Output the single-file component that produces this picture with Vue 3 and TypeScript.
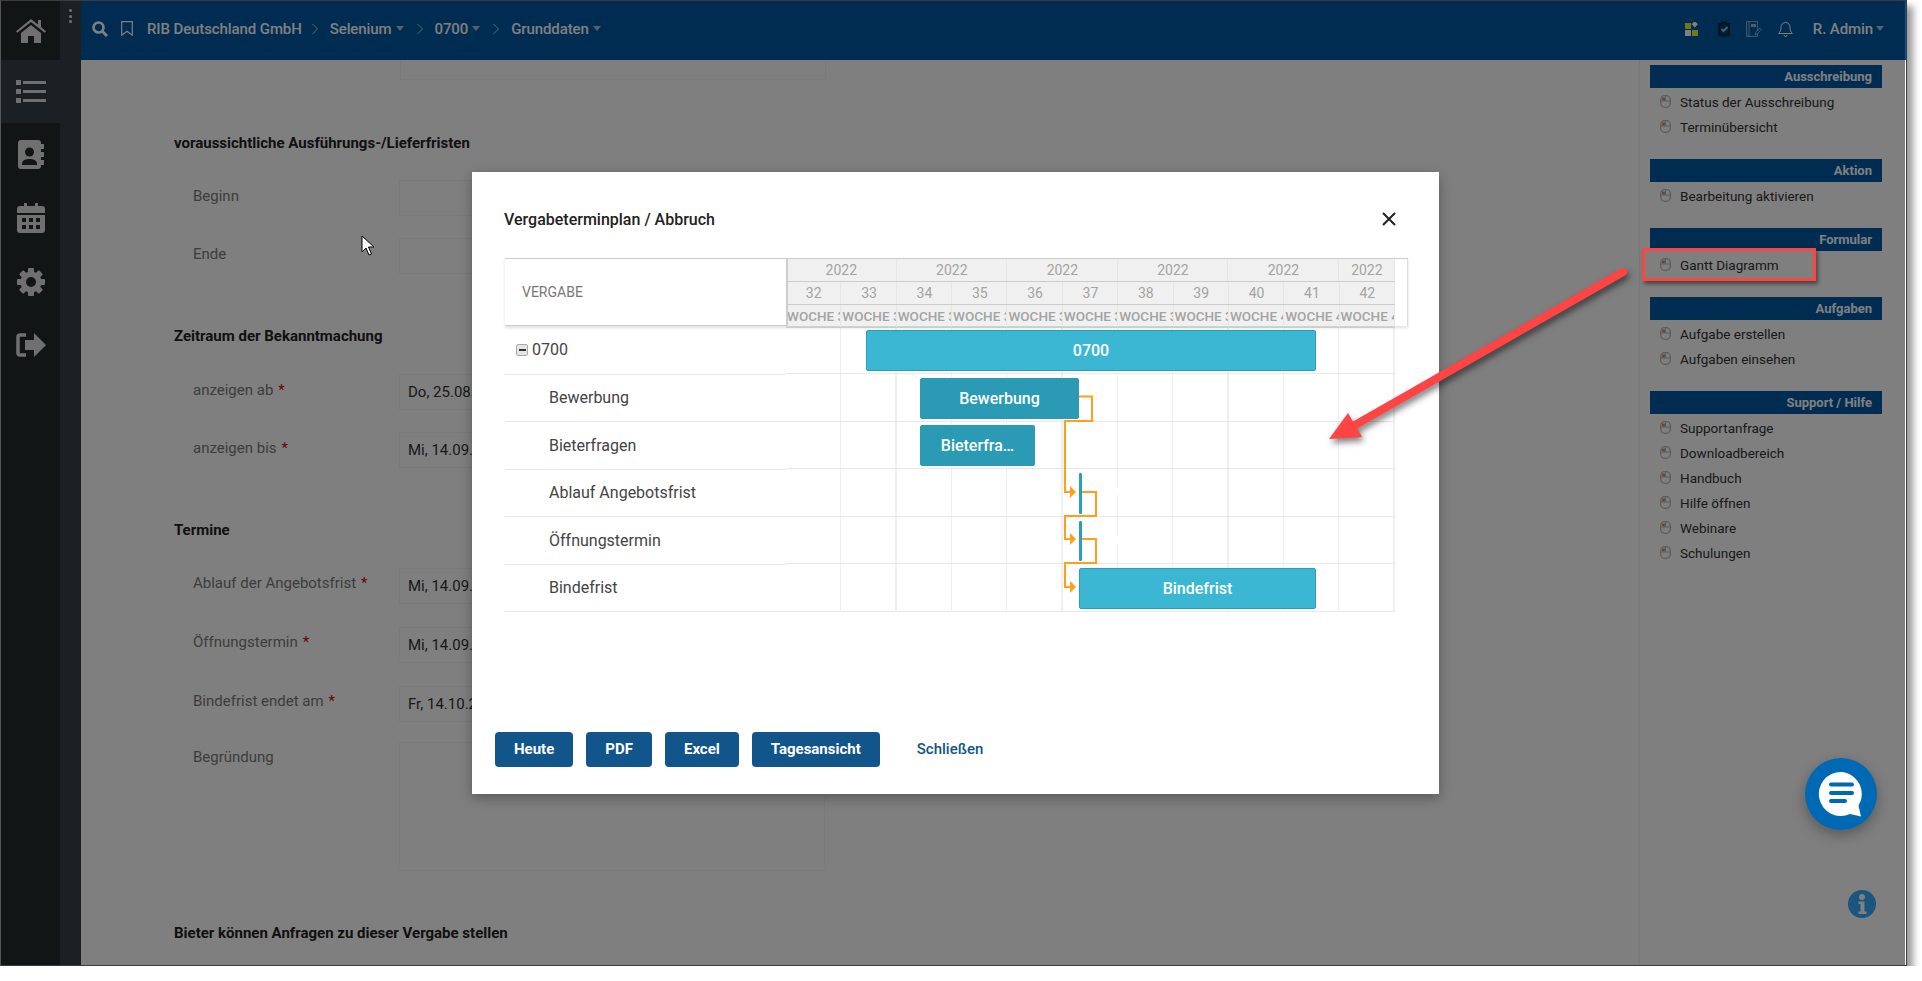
<script setup lang="ts">
interface FormRow {
  label: string
  value?: string
  required?: boolean
  tall?: boolean
}

interface FormSection {
  title: string
  rows: FormRow[]
  wide?: boolean
}

interface GanttBar {
  text: string
  x1: number
  x2: number
  y: number
  dark?: boolean
}

const crumbs = [
  { text: 'RIB Deutschland GmbH', caret: false },
  { text: 'Selenium', caret: true },
  { text: '0700', caret: true },
  { text: 'Grunddaten', caret: true },
]

const sections: FormSection[] = [
  {
    title: 'voraussichtliche Ausführungs-/Lieferfristen',
    rows: [{ label: 'Beginn' }, { label: 'Ende' }],
  },
  {
    title: 'Zeitraum der Bekanntmachung',
    rows: [
      { label: 'anzeigen ab', value: 'Do, 25.08.2022', required: true },
      { label: 'anzeigen bis', value: 'Mi, 14.09.2022', required: true },
    ],
  },
  {
    title: 'Termine',
    wide: true,
    rows: [
      { label: 'Ablauf der Angebotsfrist', value: 'Mi, 14.09.2022', required: true },
      { label: 'Öffnungstermin', value: 'Mi, 14.09.2022', required: true },
      { label: 'Bindefrist endet am', value: 'Fr, 14.10.2022', required: true },
      { label: 'Begründung', tall: true },
    ],
  },
  { title: 'Bieter können Anfragen zu dieser Vergabe stellen', rows: [] },
]

const panels = [
  { title: 'Ausschreibung', items: ['Status der Ausschreibung', 'Terminübersicht'] },
  { title: 'Aktion', items: ['Bearbeitung aktivieren'] },
  { title: 'Formular', items: ['Gantt Diagramm'] },
  { title: 'Aufgaben', items: ['Aufgabe erstellen', 'Aufgaben einsehen'] },
  {
    title: 'Support / Hilfe',
    items: ['Supportanfrage', 'Downloadbereich', 'Handbuch', 'Hilfe öffnen', 'Webinare', 'Schulungen'],
  },
]

const weeks = [32, 33, 34, 35, 36, 37, 38, 39, 40, 41, 42]
const years = [2, 2, 2, 2, 2, 1]
const ganttRows = ['Bewerbung', 'Bieterfragen', 'Ablauf Angebotsfrist', 'Öffnungstermin', 'Bindefrist']

// gantt canvas starts at page x 786 / y 326, values below are page coordinates
const bars: GanttBar[] = [
  { text: '0700', x1: 866, x2: 1316, y: 330 },
  { text: 'Bewerbung', x1: 920, x2: 1079, y: 378, dark: true },
  { text: 'Bieterfra…', x1: 920, x2: 1035, y: 425, dark: true },
  { text: 'Bindefrist', x1: 1079, x2: 1316, y: 568 },
]

function barStyle(bar: GanttBar) {
  return { left: `${bar.x1 - 786}px`, width: `${bar.x2 - bar.x1}px`, top: `${bar.y - 326}px` }
}

const links = [
  '293,70.5 306,70.5 306,95 279,95 279,166 285,166',
  '296,166 310,166 310,190 279,190 279,213 285,213',
  '296,213 310,213 310,237 279,237 279,261 285,261',
]
const arrows = ['284,160 290,166 284,172', '284,207 290,213 284,219', '284,255 290,261 284,267']
const gearTeeth = [0, 45, 90, 135, 180, 225, 270, 315]
</script>

<template>
  <div class="frame">
    <aside class="rail">
      <nav class="rail__col">
        <div class="rail__item rail__item--home">
          <svg width="30" height="24" viewBox="0 0 30 24"><path d="M15 0 22 5.500V1h3v7l5 4.200-1.300 1.600L15 3 1.300 13.800 0 12.200zM5 14 15 6l10 8v10h-7v-7h-6v7H5z" /></svg>
        </div>
        <div class="rail__item rail__item--active">
          <svg width="30" height="24" viewBox="0 0 30 24"><path d="M0 0h5v5H0zM7 1h23v3H7zM0 9h5v5H0zM7 10h23v3H7zM0 18h5v5H0zM7 19h23v3H7z" /></svg>
        </div>
        <div class="rail__item">
          <svg width="28" height="30" viewBox="0 0 28 30">
            <path d="M4 0h17a3 3 0 0 1 3 3v1h3v5h-3v3h3v5h-3v3h3v5h-3v1a3 3 0 0 1-3 3H4a3 3 0 0 1-3-3V3a3 3 0 0 1 3-3z" />
            <circle class="cut" cx="12.500" cy="12" r="4.500" />
            <path class="cut" d="M5 24c0-4 4-5 7.500-5s7.500 1 7.500 5v1H5z" />
          </svg>
        </div>
        <div class="rail__item">
          <svg width="28" height="30" viewBox="0 0 28 30">
            <path d="M7 0h3v3h8V0h3v3h4a3 3 0 0 1 3 3v4H0V6a3 3 0 0 1 3-3h4zM0 12h28v15a3 3 0 0 1-3 3H3a3 3 0 0 1-3-3z" />
            <path class="cut" d="M5 15h4v4H5zM12 15h4v4h-4zM19 15h4v4h-4zM5 22h4v4H5zM12 22h4v4h-4zM19 22h4v4h-4z" />
          </svg>
        </div>
        <div class="rail__item">
          <svg width="28" height="28" viewBox="0 0 28 28">
            <rect v-for="a in gearTeeth" :key="a" x="11" y="0" width="6" height="8" rx="1" :transform="`rotate(${a} 14 14)`" />
            <circle cx="14" cy="14" r="10.500" />
            <circle class="cut" cx="14" cy="14" r="5" />
          </svg>
        </div>
        <div class="rail__item">
          <svg width="30" height="24" viewBox="0 0 30 24">
            <path d="M18 0l12 12-12 12v-7H9V7h9z" />
            <path d="M10 2H4a2 2 0 0 0-2 2v16a2 2 0 0 0 2 2h6" fill="none" stroke="#e0e0e0" stroke-width="3.500" />
          </svg>
        </div>
      </nav>
      <div class="rail__dots"><i /><i /><i /></div>
    </aside>

    <div class="page">
      <header class="topbar">
        <svg class="topbar__search" width="16" height="16" viewBox="0 0 16 16"><circle cx="6.500" cy="6.500" r="5" fill="none" stroke="#fff" stroke-width="2.600" /><path d="M10 10l5 5" stroke="#fff" stroke-width="3" /></svg>
        <svg class="topbar__mark" width="12" height="15" viewBox="0 0 12 15"><path d="M.7.700h10.600v13.500L6 10.300.7 14.200z" fill="none" stroke="#fff" stroke-width="1.200" /></svg>
        <template v-for="(crumb, i) in crumbs" :key="crumb.text">
          <svg v-if="i > 0" class="crumb__sep" width="6" height="12" viewBox="0 0 6 12"><path d="M.5 1l5 5-5 5" fill="none" stroke="#fff" stroke-opacity=".7" stroke-width="1" /></svg>
          <span class="crumb">{{ crumb.text }}</span>
          <span v-if="crumb.caret" class="caret" />
        </template>
        <div class="topbar__right">
          <svg class="tool tool--apps" width="14" height="14" viewBox="0 0 14 14">
            <rect x="0" y="1" width="6" height="6" fill="#e6f020" />
            <rect x="7.500" y="0" width="4.500" height="4.500" transform="rotate(45 9.750 2.250)" fill="#fff" />
            <rect x="0" y="8" width="6" height="6" fill="#fff" />
            <rect x="7" y="8" width="6" height="6" fill="#e6f020" />
          </svg>
          <svg class="tool tool--clip" width="13" height="16" viewBox="0 0 13 16"><path d="M1 3h2.500V1.500h5V3H11v11.500H1z" fill="#003f78" stroke="#0a1a2a" stroke-width="1.300" /><path d="M3.500 8l2 2 4-4" fill="none" stroke="#fff" stroke-opacity=".65" stroke-width="2" /></svg>
          <svg class="tool tool--book" width="16" height="16" viewBox="0 0 16 16"><path d="M.6.600h11v14.800H.6zM3 .6v14.800" fill="none" stroke="#fff" stroke-opacity=".55" stroke-width="1" /><path d="M5 3h5v3H5z" fill="#fff" fill-opacity=".6" /><path d="M9 14l1-3 4-4 1.500 1.500-4 4z" fill="#0058a4" stroke="#fff" stroke-opacity=".6" stroke-width=".8" /></svg>
          <svg class="tool tool--bell" width="15" height="16" viewBox="0 0 15 16"><path d="M7.500 1.500c-3 0-4.500 2.200-4.500 5 0 3-1 4.500-2.300 6h13.600c-1.300-1.500-2.300-3-2.300-6 0-2.800-1.500-5-4.500-5zM6 14a1.500 1.500 0 0 0 3 0" fill="none" stroke="#fff" stroke-width="1" /></svg>
          <span class="topbar__user">R. Admin</span>
          <span class="caret" />
        </div>
      </header>

      <div class="body">
        <main class="form">
          <div class="input input--stub" />
          <section v-for="sec in sections" :key="sec.title" class="form__section">
            <h3 class="form__title">{{ sec.title }}</h3>
            <div v-if="sec.rows.length" class="form__rows" :class="{ 'form__rows--wide': sec.wide }">
              <div v-for="row in sec.rows" :key="row.label" class="form__row" :class="{ 'form__row--tall': row.tall }">
                <label class="form__label">{{ row.label }}<b v-if="row.required" class="req">*</b></label>
                <div class="input" :class="{ 'input--tall': row.tall }">{{ row.value }}</div>
              </div>
            </div>
          </section>
        </main>

        <aside class="panel">
          <section v-for="p in panels" :key="p.title" class="panel__group">
            <h4 class="panel__head">{{ p.title }}</h4>
            <ul class="panel__list">
              <li v-for="item in p.items" :key="item" class="panel__item">
                <svg width="11" height="13" viewBox="0 0 11 13">
                  <rect x=".7" y=".7" width="9.600" height="11.600" rx="4" fill="#fff" stroke="#b8b8b8" stroke-width="1.300" />
                  <path d="M2 2.500h3v3H2z" fill="#d89060" />
                  <path d="M5.500 1v5M1 6h9" stroke="#b8b8b8" stroke-width="1" />
                </svg>
                <span>{{ item }}</span>
              </li>
            </ul>
          </section>
        </aside>
      </div>
    </div>

    <div class="overlay" />

    <!-- dialog -->
    <div class="modal">
      <div class="modal__top">
        <h2 class="modal__title">Vergabeterminplan / Abbruch</h2>
        <svg class="modal__close" width="16" height="16" viewBox="0 0 16 16"><path d="M2 2l12 12M14 2 2 14" stroke="#222" stroke-width="2" /></svg>
      </div>

      <div class="gantt">
        <div class="gantt__head">
          <div class="gantt__name">VERGABE</div>
          <div class="gantt__scale">
            <div class="scale__row">
              <div v-for="(span, i) in years" :key="i" class="scale__cell scale__cell--center" :style="{ flex: span }">2022</div>
            </div>
            <div class="scale__row">
              <div v-for="w in weeks" :key="w" class="scale__cell scale__cell--center">{{ w }}</div>
            </div>
            <div class="scale__row scale__row--last">
              <div v-for="w in weeks" :key="w" class="scale__cell">WOCHE {{ w }}</div>
            </div>
          </div>
        </div>
        <div class="gantt__body">
          <div class="gantt__labels">
            <div class="gantt__row gantt__row--root">
              <span class="tree-toggle"><i /></span>
              <span>0700</span>
            </div>
            <div v-for="r in ganttRows" :key="r" class="gantt__row gantt__row--child">{{ r }}</div>
          </div>
          <div class="gantt__canvas">
            <svg class="gantt__links" width="609" height="285" viewBox="0 0 609 285">
              <rect x="330" y="161" width="3" height="8" fill="#fff" />
              <rect x="330" y="210" width="3" height="8" fill="#fff" />
              <polyline v-for="l in links" :key="l" :points="l" fill="none" stroke="#ff9f1a" stroke-width="2" />
              <polygon v-for="a in arrows" :key="a" :points="a" fill="#ff9f1a" />
            </svg>
            <div v-for="b in bars" :key="b.text" class="bar" :class="{ 'bar--dark': b.dark }" :style="barStyle(b)">{{ b.text }}</div>
            <div class="milestone milestone--a" />
            <div class="milestone milestone--b" />
          </div>
        </div>
      </div>

      <footer class="modal__foot">
        <button class="btn">Heute</button>
        <button class="btn">PDF</button>
        <button class="btn">Excel</button>
        <button class="btn">Tagesansicht</button>
        <a class="modal__link">Schließen</a>
      </footer>
    </div>

    <!-- floating buttons -->
    <button class="chat">
      <svg width="48" height="48" viewBox="0 0 48 48">
        <path d="M24 2a22 22 0 1 0 9 42l11 2.500-2.500-11A22 22 0 0 0 24 2z" fill="#fff" />
        <path d="M14 14.500h21M14 23h21M14 31h14" stroke="#0069b4" stroke-width="4" stroke-linecap="round" />
      </svg>
    </button>
    <svg class="info" width="28" height="28" viewBox="0 0 28 28">
      <circle cx="14" cy="14" r="14" fill="#1a5680" />
      <circle cx="14" cy="7" r="3" fill="#808080" />
      <path d="M10.500 11.500h6v10h2V24h-8v-2.500h2v-7.500h-2z" fill="#808080" />
    </svg>

    <!-- screenshot annotations -->
    <svg class="pointer" width="14" height="21" viewBox="0 0 14 21"><path d="M1 1v16l4-4 3 7 2.500-1-3-7H13z" fill="#fff" stroke="#000" stroke-width="1" /></svg>
    <div class="callout" />
    <svg class="arrow" width="330" height="190" viewBox="0 0 330 190">
      <path d="M19 179 38 153 52 177z" fill="#ff4444" />
      <path d="M45 165 313 12" fill="none" stroke="#ff4444" stroke-width="8" stroke-linecap="round" />
    </svg>
  </div>
</template>

<style scoped>
.frame {
  position: relative;
  display: flex;
  width: 1905px;
  height: 964px;
  overflow: hidden;
  border: 1px solid #3c3c3c;
  border-left-color: #555;
  box-shadow: 6px 6px 7px rgba(0, 0, 0, 0.4);
  font-family: Roboto, "Liberation Sans", sans-serif;
  background: #fff;
}

/* ── Rail ─────────────────────────────────────────── */
.rail {
  flex: 0 0 80px;
  display: flex;
  background: #364049;
}

.rail__col {
  width: 59px;
  background: #222a2c;
}

.rail__item {
  height: 63.4px;
  display: flex;
  align-items: center;
  justify-content: center;
}

.rail__item svg {
  fill: #e0e0e0;
}

.rail__item .cut {
  fill: #222a2c;
}

.rail__item--home {
  height: 59px;
}

.rail__item--active {
  background: #364049;
}

.rail__dots {
  display: flex;
  flex-direction: column;
  gap: 2.500px;
  padding: 8px 0 0 9px;
}

.rail__dots i {
  width: 3px;
  height: 3px;
  border-radius: 50%;
  background: #e8e8e8;
}

/* ── Top bar ──────────────────────────────────────── */
.page {
  flex: 1;
  min-width: 0;
  display: flex;
  flex-direction: column;
}

.topbar {
  flex: 0 0 59px;
  box-sizing: border-box;
  display: flex;
  align-items: center;
  padding: 0 0 4px 11px;
  background: #0058a4;
  color: #fff;
  font-size: 15px;
  font-weight: 500;
  letter-spacing: -0.1px;
}

.topbar__search {
  margin-right: 13px;
}

.topbar__mark {
  margin-right: 14px;
}

.crumb__sep {
  margin: 0 12px 0 10px;
}

.caret {
  width: 0;
  height: 0;
  margin-left: 4px;
  margin-right: 1px;
  border: 4.500px solid transparent;
  border-top: 5px solid rgba(255, 255, 255, 0.65);
  border-bottom: 0;
}

.crumb + .caret + .crumb__sep {
  margin-left: 12px;
}

.topbar__right {
  margin-left: auto;
  display: flex;
  align-items: center;
  padding-right: 21px;
}

.tool--clip {
  margin-left: 19px;
}

.tool--book {
  margin-left: 15px;
}

.tool--bell {
  margin-left: 16px;
}

.topbar__user {
  margin-left: 20px;
}

.topbar__right .caret {
  margin-left: 3px;
}

/* ── Form ─────────────────────────────────────────── */
.body {
  flex: 1;
  min-height: 0;
  display: flex;
}

.form {
  flex: 1;
  padding-left: 93px;
  overflow: hidden;
}

.form__section {
  margin-top: 52px;
}

.form__section:first-of-type {
  margin-top: 53px;
}

.form__section:first-of-type .form__title {
  margin-bottom: 27px;
}

.form__title {
  margin: 0 0 28px;
  font-size: 15px;
  line-height: 20px;
  font-weight: 700;
  color: #222;
}

.form__rows {
  display: flex;
  flex-direction: column;
  gap: 22px;
}

.form__rows--wide {
  gap: 23px;
}

.form__row {
  display: flex;
  padding-left: 19px;
}

.form__row--tall {
  margin-top: -3px;
}

.form__label {
  flex: 0 0 206px;
  font-size: 15px;
  line-height: 32px;
  color: #7a7a7a;
}

.form__rows--wide .form__label {
  line-height: 30px;
}

.req {
  margin-left: 5px;
  color: #e00000;
  font-weight: 400;
}

.input {
  width: 426px;
  height: 36px;
  box-sizing: border-box;
  padding: 0 8px;
  border: 1px solid #f4f4f4;
  font-size: 15px;
  line-height: 34px;
  color: #333;
}

.input--stub {
  margin: -16px 0 0 226px;
}

.input--tall {
  height: 129px;
}

/* ── Side panel ───────────────────────────────────── */
.panel {
  flex: 0 0 267px;
  box-sizing: border-box;
  padding: 5px 24px 0 10px;
  border-left: 1px solid #eee;
}

.panel__group {
  margin-bottom: 20px;
}

.panel__head {
  margin: 0;
  height: 23px;
  padding-right: 10px;
  background: #0058a4;
  color: #fff;
  font-size: 13px;
  line-height: 23px;
  font-weight: 700;
  text-align: right;
}

.panel__list {
  margin: 0;
  padding: 1px 0 0;
  list-style: none;
}

.panel__item {
  display: flex;
  align-items: center;
  gap: 9px;
  height: 25px;
  padding-left: 10px;
  font-size: 13.500px;
  color: #333;
}

/* ── Overlay + dialog ─────────────────────────────── */
.overlay {
  position: absolute;
  inset: 0 1px 0 0;
  background: rgba(0, 0, 0, 0.5);
}

.modal {
  position: absolute;
  left: 471px;
  top: 171px;
  width: 967px;
  height: 622px;
  box-sizing: border-box;
  display: flex;
  flex-direction: column;
  padding: 0 31px 27px 33px;
  background: #fff;
  box-shadow: 0 4px 12px rgba(0, 0, 0, 0.3);
}

.modal__top {
  flex: 0 0 86px;
  display: flex;
  align-items: flex-start;
  justify-content: space-between;
}

.modal__title {
  margin: 38px 0 0 -1px;
  font-size: 16px;
  line-height: 20px;
  font-weight: 500;
  color: #222;
}

.modal__close {
  margin: 39px 11px 0 0;
}

.modal__foot {
  margin: auto 0 0 -10px;
  display: flex;
  align-items: center;
  gap: 13px;
}

.btn {
  height: 35px;
  padding: 0 19px 2px;
  border: 0;
  border-radius: 4px;
  background: #12558a;
  color: #fff;
  font: 700 15px Roboto, "Liberation Sans", sans-serif;
}

.modal__link {
  margin: -2px 0 0 24px;
  color: #12558a;
  font-size: 15px;
  font-weight: 500;
}

/* ── Gantt ────────────────────────────────────────── */
.gantt__head {
  position: relative;
  z-index: 1;
  display: flex;
  height: 68px;
  box-sizing: border-box;
  border-top: 1px solid #ccc;
  border-right: 1px solid #ddd;
  box-shadow: 0 2px 3px rgba(0, 0, 0, 0.12);
  padding-right: 12px;
}

.gantt__name {
  position: relative;
  z-index: 1;
  flex: 0 0 283px;
  margin-right: -2px;
  box-sizing: border-box;
  padding-left: 17px;
  border-right: 2px solid #ccc;
  border-bottom: 1px solid #ccc;
  background: #fff;
  font-size: 14px;
  line-height: 66px;
  color: #777;
}

.gantt__scale {
  flex: 1;
  min-width: 0;
  display: flex;
  flex-direction: column;
  background: #f0f0f0;
  color: #a3a3a3;
}

.scale__row {
  flex: 1;
  display: flex;
  border-bottom: 1px solid #ccc;
}

.scale__cell {
  flex: 1 1 0;
  min-width: 0;
  box-sizing: border-box;
  overflow: hidden;
  padding-left: 1px;
  border-right: 1px solid #e6e6e6;
  white-space: nowrap;
  font-size: 14px;
  line-height: 22px;
}

.scale__row--last .scale__cell {
  font-size: 13.500px;
  font-weight: 500;
}

.scale__cell--center {
  text-align: center;
}

.gantt__body {
  display: flex;
}

.gantt__labels {
  flex: 0 0 281px;
}

.gantt__row {
  display: flex;
  align-items: center;
  height: 47.500px;
  box-sizing: border-box;
  border-bottom: 1px solid #e8e8e8;
  padding-left: 11px;
  font-size: 16px;
  color: #444;
}

.gantt__row--root {
  height: 48.500px;
}

.gantt__row--child {
  padding-left: 44px;
}

.tree-toggle {
  display: flex;
  align-items: center;
  justify-content: center;
  width: 10px;
  height: 10px;
  margin-right: 4px;
  border: 1px solid #aaa;
  border-radius: 2px;
  background: #e4e4e4;
}

.tree-toggle i {
  width: 7px;
  height: 1.500px;
  background: #333;
}

.gantt__canvas {
  position: relative;
  width: 608.900px;
  height: 286px;
  background:
    repeating-linear-gradient(to bottom, #e8e8e8 0 1px, transparent 1px 47.500px),
    repeating-linear-gradient(to right, transparent 0 54px, #efefef 54px 55.350px);
}

.gantt__links {
  position: absolute;
  left: 0;
  top: 0;
}

.bar {
  position: absolute;
  height: 41px;
  box-sizing: border-box;
  border: 1px solid #2a9fb8;
  border-radius: 2px;
  background: #3cb7d3;
  color: #fff;
  font-size: 16px;
  font-weight: 500;
  line-height: 39px;
  text-align: center;
  white-space: nowrap;
  overflow: hidden;
}

.bar--dark {
  background: #2a9ab5;
  border-color: #2a9ab5;
}

.milestone {
  position: absolute;
  left: 293px;
  width: 3px;
  border-radius: 1px;
  background: #2a9fb8;
}

.milestone--a {
  top: 147px;
  height: 41px;
}

.milestone--b {
  top: 195px;
  height: 40px;
}

/* ── Floating ─────────────────────────────────────── */
.chat {
  position: absolute;
  left: 1804px;
  top: 757px;
  display: flex;
  align-items: center;
  justify-content: center;
  width: 72px;
  height: 72px;
  padding: 0;
  border: 0;
  border-radius: 50%;
  background: #0069b4;
  box-shadow: 0 5px 14px rgba(0, 0, 0, 0.3);
}

.info {
  position: absolute;
  left: 1847px;
  top: 889px;
}

.pointer {
  position: absolute;
  left: 360px;
  top: 234px;
}

.callout {
  position: absolute;
  left: 1641px;
  top: 247px;
  width: 174px;
  height: 33px;
  box-sizing: border-box;
  border: 3px solid #f44;
  box-shadow: 2px 3px 4px rgba(0, 0, 0, 0.45);
}

.arrow {
  position: absolute;
  left: 1309px;
  top: 259px;
  filter: drop-shadow(2px 4px 3px rgba(0, 0, 0, 0.5));
}
</style>

<style>
body {
  background: #fff;
  overflow: hidden;
}
</style>
